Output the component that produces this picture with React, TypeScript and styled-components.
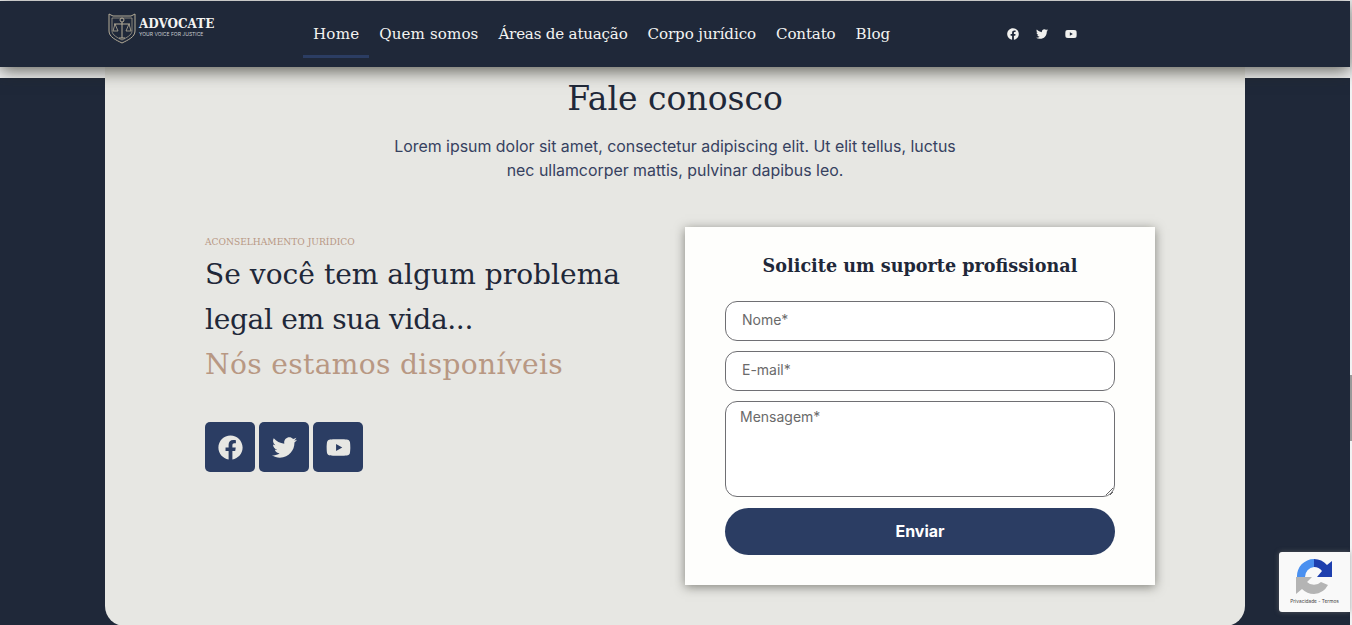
import React from "react";
import styled, { createGlobalStyle } from "styled-components";
import { FaFacebook, FaTwitter, FaYoutube } from "react-icons/fa";

const SERIF = `"DejaVu Serif", "Liberation Serif", serif`;
const SANS = `"Inter", "Open Sans", sans-serif`;

const Global = createGlobalStyle`
  html, body { margin: 0; padding: 0; height: 625px; overflow: hidden; background: #f1f2f3; }
  * { box-sizing: border-box; }
`;

const Page = styled.div`
  position: relative;
  width: 1352px;
  height: 625px;
  overflow: hidden;
  display: flex;
  flex-direction: column;
  padding-top: 1px;
  padding-right: 2px;
`;

const Header = styled.header`
  position: relative;
  z-index: 2;
  flex: none;
  height: 66px;
  background: #1f2839;
  box-shadow: 0 4px 16px rgba(40, 40, 30, 0.7);
  display: flex;
  align-items: stretch;
  padding-left: 108px;
`;

const Brand = styled.a`
  width: 195px;
  flex: none;
  display: flex;
  align-items: flex-start;
  gap: 3px;
  padding-top: 11px;
`;

const BrandText = styled.div`
  display: flex;
  flex-direction: column;
  padding-top: 6px;
`;

const BrandName = styled.span`
  font: 700 12px/13px ${SERIF};
  color: #f4f4f2;
`;

const BrandTag = styled.span`
  font: 400 5px/6px ${SANS};
  color: #c9ccd2;
  white-space: nowrap;
`;

const Nav = styled.nav`
  display: flex;
  align-items: stretch;
  height: 57px;
`;

const NavItem = styled.a<{ $active?: boolean; $tracking?: number }>`
  display: flex;
  align-items: center;
  padding: 12px 10px 0;
  font: 400 15.1px/20px ${SERIF};
  letter-spacing: ${(p) => p.$tracking ?? 0}px;
  color: #f3f3f1;
  white-space: nowrap;
  border-bottom: 3px solid ${(p) => (p.$active ? "#2b3d63" : "transparent")};
`;

const HeaderSocial = styled.div`
  display: flex;
  align-items: center;
  gap: 17px;
  margin-left: 107px;
  height: 66px;
  color: #f1f1ef;
  font-size: 12px;
`;

const Section = styled.main`
  flex: 1;
  margin-top: 11px;
  background: #1f2839;
  padding: 0 105px;
  min-height: 0;
`;

const Card = styled.div`
  height: 578px;
  margin-top: -30px;
  background: #e7e7e3;
  border-radius: 0 0 20px 20px;
  padding-top: 27px;
  display: flex;
  flex-direction: column;
  align-items: center;
`;

const Title = styled.h1`
  margin: 0;
  font: 400 33px/48px ${SERIF};
  color: #1f2839;
`;

const Lead = styled.p`
  margin: 12px 0 0;
  width: 575px;
  text-align: center;
  font: 400 15.9px/24px ${SANS};
  color: #364160;
`;

const Columns = styled.div`
  width: 100%;
  display: flex;
  justify-content: space-between;
  padding: 0 90px 0 100px;
  margin-top: 44px;
`;

const Left = styled.div`
  display: flex;
  flex-direction: column;
  width: 460px;
`;

const Eyebrow = styled.span`
  margin-top: 9px;
  font: 400 9.1px/12px ${SERIF};
  color: #b89883;
  text-transform: uppercase;
`;

const Pitch = styled.h2`
  margin: 4px 0 0;
  font: 400 28.1px/45px ${SERIF};
  color: #1f2839;
  white-space: nowrap;
`;

const PitchLine = styled.span<{ $tracking?: number }>`
  display: block;
  letter-spacing: ${(p) => p.$tracking ?? 0}px;
`;

const Accent = styled(PitchLine)`
  color: #b89883;
`;

const SocialRow = styled.div`
  display: flex;
  gap: 4px;
  margin-top: 35px;
`;

const SocialButton = styled.a`
  width: 50px;
  height: 50px;
  border-radius: 5px;
  background: #2b3d63;
  color: #e7e7e3;
  font-size: 25px;
  display: flex;
  align-items: center;
  justify-content: center;
`;

const FormCard = styled.form`
  width: 470px;
  height: 358px;
  background: #fefefc;
  box-shadow: 0 2px 10px rgba(50, 50, 40, 0.55);
  padding: 26px 40px 0;
  display: flex;
  flex-direction: column;
`;

const FormTitle = styled.h3`
  margin: 0 0 22px;
  text-align: center;
  font: 700 17.6px/26px ${SERIF};
  color: #1f2839;
  white-space: nowrap;
`;

const Field = styled.input`
  height: 40px;
  margin-bottom: 10px;
  border: 1px solid #6f6f73;
  border-radius: 12px;
  background: #fff;
  padding: 0 16px 3px;
  font: 400 14px/20px ${SANS};
  outline: none;
  &::placeholder { color: #6a6a6a; opacity: 1; }
`;

const Message = styled.textarea`
  height: 96px;
  margin-bottom: 11px;
  border: 1px solid #6f6f73;
  border-radius: 12px;
  background: #fff;
  padding: 5px 14px;
  font: 400 14px/20px ${SANS};
  outline: none;
  resize: vertical;
  &::placeholder { color: #6a6a6a; opacity: 1; }
`;

const Submit = styled.button`
  height: 47px;
  border: 0;
  border-radius: 24px;
  background: #2b3d63;
  color: #fff;
  padding: 0 0 2px;
  font: 700 16px/20px ${SANS};
`;

const Recaptcha = styled.div`
  position: absolute;
  right: 2px;
  top: 552px;
  width: 71px;
  height: 60px;
  background: #f9f9f9;
  border-radius: 3px 0 0 3px;
  box-shadow: 0 0 5px rgba(120, 120, 120, 0.6);
  display: flex;
  flex-direction: column;
  align-items: center;
  padding-top: 6px;
`;

const RecaptchaText = styled.span`
  margin-top: 2px;
  font: 400 4.8px/8px ${SANS};
  color: #444;
  white-space: nowrap;
`;

const ScrollThumb = styled.div`
  position: absolute;
  right: 0;
  top: 375px;
  width: 2px;
  height: 66px;
  background: #9a9a9a;
`;

const Logo = () => (
  <svg width="28" height="32" viewBox="0 0 28 32" fill="none" stroke="#b5ac98" strokeWidth="1">
    <path d="M1 2 L5 4 H23 L27 2 V19 C27 25 20 28 14 31 C8 28 1 25 1 19 Z" />
    <path d="M4 6 H24 V19 C24 23 18 26 14 28 C10 26 4 23 4 19 Z" strokeWidth="0.7" />
    <circle cx="14" cy="8" r="2" />
    <path d="M14 10 V26 M6 12 H22 M11 26 H17" />
    <path d="M7 12 L5 19 H10 Z M21 12 L18 19 H23 Z" strokeWidth="0.8" />
  </svg>
);

const RecaptchaIcon = () => (
  <svg width="37" height="37" viewBox="0 0 37 37">
    <path d="M1 19 A17 17 0 0 1 18 1 V9 A10 10 0 0 0 9 19 Z" fill="#4a90f0" />
    <path d="M18 1 A17 17 0 0 1 31 7 L36 3 V19 H21 L26 13 A10 10 0 0 0 18 9 Z" fill="#1e3fae" />
    <path d="M0 19 H16 L11 24 A10 10 0 0 0 25 24 L32 27 A17 17 0 0 1 18 36 A17 17 0 0 1 6 31 L0 36 Z" fill="#b4b4b4" />
  </svg>
);

export default function App() {
  return (
    <>
      <Global />
      <Page>
        <Header>
          <Brand>
            <Logo />
            <BrandText>
              <BrandName>ADVOCATE</BrandName>
              <BrandTag>YOUR VOICE FOR JUSTICE</BrandTag>
            </BrandText>
          </Brand>
          <Nav>
            <NavItem $active $tracking={0.2}>Home</NavItem>
            <NavItem $tracking={0.1}>Quem somos</NavItem>
            <NavItem $tracking={-0.2}>Áreas de atuação</NavItem>
            <NavItem $tracking={-0.1}>Corpo jurídico</NavItem>
            <NavItem $tracking={-0.15}>Contato</NavItem>
            <NavItem>Blog</NavItem>
          </Nav>
          <HeaderSocial>
            <FaFacebook />
            <FaTwitter />
            <FaYoutube />
          </HeaderSocial>
        </Header>
        <Section>
          <Card>
            <Title>Fale conosco</Title>
            <Lead>
              Lorem ipsum dolor sit amet, consectetur adipiscing elit. Ut elit tellus, luctus nec
              ullamcorper mattis, pulvinar dapibus leo.
            </Lead>
            <Columns>
              <Left>
                <Eyebrow>Aconselhamento jurídico</Eyebrow>
                <Pitch>
                  <PitchLine>Se você tem algum problema</PitchLine>
                  <PitchLine $tracking={-0.35}>legal em sua vida...</PitchLine>
                  <Accent $tracking={0.35}>Nós estamos disponíveis</Accent>
                </Pitch>
                <SocialRow>
                  <SocialButton><FaFacebook /></SocialButton>
                  <SocialButton><FaTwitter /></SocialButton>
                  <SocialButton><FaYoutube /></SocialButton>
                </SocialRow>
              </Left>
              <FormCard>
                <FormTitle>Solicite um suporte profissional</FormTitle>
                <Field placeholder="Nome*" />
                <Field placeholder="E-mail*" />
                <Message placeholder="Mensagem*" />
                <Submit type="button">Enviar</Submit>
              </FormCard>
            </Columns>
          </Card>
        </Section>
        <Recaptcha>
          <RecaptchaIcon />
          <RecaptchaText>Privacidade - Termos</RecaptchaText>
        </Recaptcha>
        <ScrollThumb />
      </Page>
    </>
  );
}
